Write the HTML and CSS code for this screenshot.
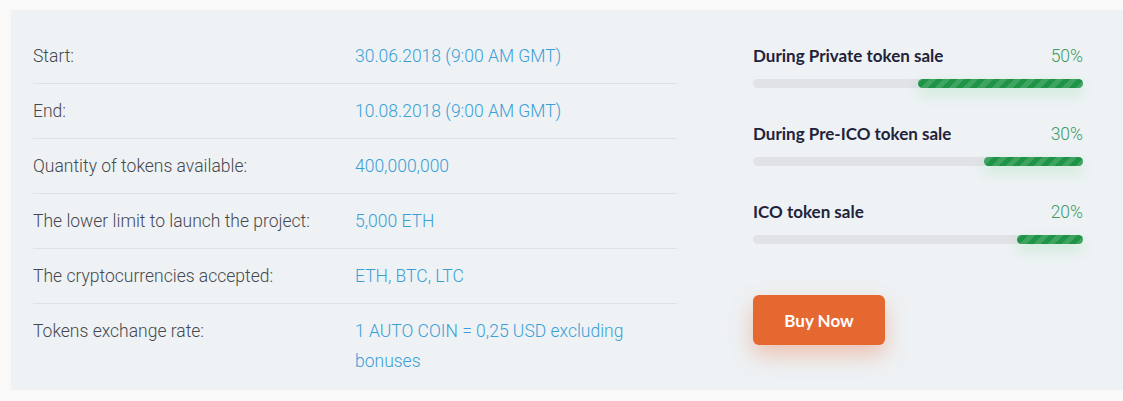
FILE: index.html
```html
<!DOCTYPE html>
<html>
<head>
<meta charset="utf-8">
<link rel="stylesheet" href="styles.css">
</head>
<body>
<div class="panel">
  <div class="details">
    <div class="row"><div class="label">Start:</div><div class="value">30.06.2018 (9:00 AM GMT)</div></div>
    <div class="row"><div class="label">End:</div><div class="value">10.08.2018 (9:00 AM GMT)</div></div>
    <div class="row"><div class="label">Quantity of tokens available:</div><div class="value">400,000,000</div></div>
    <div class="row"><div class="label">The lower limit to launch the project:</div><div class="value">5,000 ETH</div></div>
    <div class="row"><div class="label">The cryptocurrencies accepted:</div><div class="value">ETH, BTC, LTC</div></div>
    <div class="row last"><div class="label">Tokens exchange rate:</div><div class="value">1 AUTO COIN = 0,25 USD excluding bonuses</div></div>
  </div>
  <div class="sales">
    <div class="sale">
      <div class="sale-head"><span class="sale-name">During Private token sale</span><span class="sale-pct">50%</span></div>
      <div class="track"><div class="fill" style="width:50%"></div></div>
    </div>
    <div class="sale">
      <div class="sale-head"><span class="sale-name">During Pre-ICO token sale</span><span class="sale-pct">30%</span></div>
      <div class="track"><div class="fill" style="width:30%"></div></div>
    </div>
    <div class="sale">
      <div class="sale-head"><span class="sale-name">ICO token sale</span><span class="sale-pct">20%</span></div>
      <div class="track"><div class="fill" style="width:20%"></div></div>
    </div>
    <button class="buy">Buy Now</button>
  </div>
</div>
</body>
</html>
```

FILE: styles.css
```css
html, body {
  margin: 0;
  padding: 0;
  background: #f9f9f9;
  overflow: hidden;
}
body {
  padding: 10px 0 0 11px;
}
.panel {
  background: #eef2f5;
  height: 380px;
  box-sizing: border-box;
  padding: 19px 0 0 22px;
  display: flex;
  gap: 76px;
}
.details {
  width: 644px;
  font-family: Roboto, "Liberation Sans", sans-serif;
  font-weight: 300;
  font-size: 17.5px;
}
.row {
  display: flex;
  padding: 12px 0;
  line-height: 30px;
  border-bottom: 1px solid #dde2e6;
}
.row.last {
  border-bottom: none;
}
.label {
  width: 322px;
  flex: none;
  color: #45484d;
}
.value {
  color: #3a9fd6;
  width: 290px;
}
.sales {
  width: 330px;
  padding-top: 17px;
}
.sale {
  margin-bottom: 36px;
}
.sale:nth-child(3) {
  margin-bottom: 51px;
}
.sale-head {
  display: flex;
  justify-content: space-between;
  line-height: 20px;
  height: 20px;
  margin-bottom: 13px;
}
.sale-name {
  font-family: Lato, "Open Sans", sans-serif;
  font-weight: 700;
  font-size: 17px;
  color: #22223a;
}
.sale-pct {
  font-family: Roboto, sans-serif;
  font-weight: 300;
  font-size: 17.5px;
  color: #3c9a62;
}
.track {
  height: 9px;
  background: #e1e2e6;
  border-radius: 5px;
  display: flex;
  justify-content: flex-end;
}
.fill {
  height: 9px;
  border-radius: 5px;
  background-color: #1f9447;
  background-image: repeating-linear-gradient(-45deg, rgba(255,255,255,0.14) 0 5px, transparent 5px 10px);
  box-shadow: 0 6px 14px rgba(60, 200, 80, 0.22);
}
.buy {
  display: block;
  width: 132px;
  height: 50px;
  border: none;
  border-radius: 6px;
  background: #e66831;
  color: #fff;
  font-family: Lato, "Open Sans", sans-serif;
  font-weight: 700;
  font-size: 17px;
  box-shadow: 0 10px 22px rgba(232, 104, 49, 0.35);
  cursor: pointer;
}
```
